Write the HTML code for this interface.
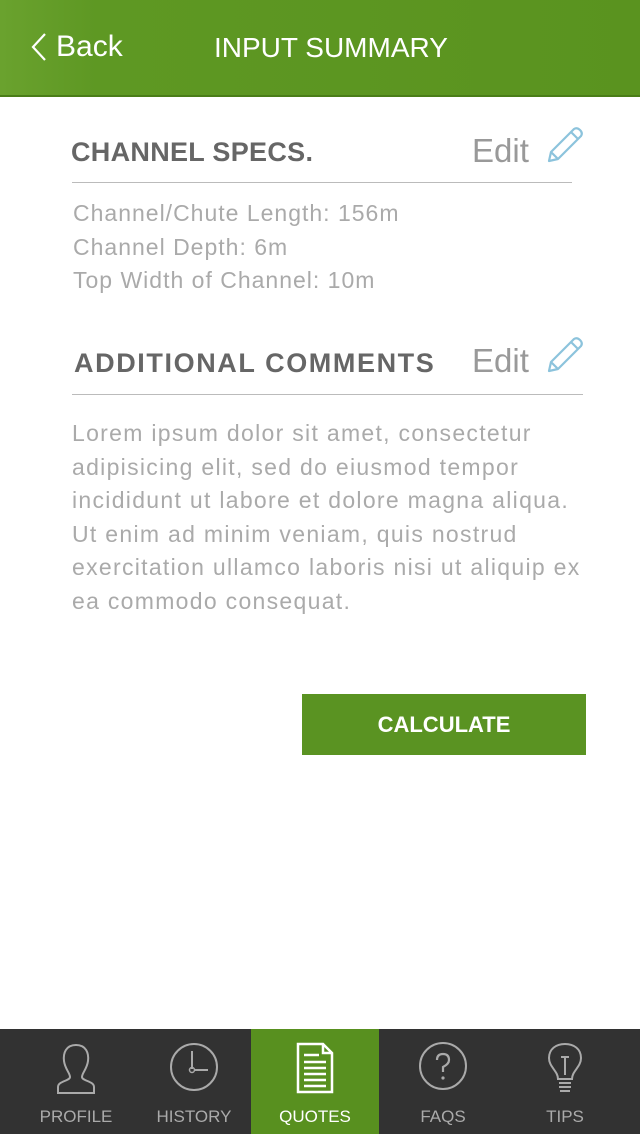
<!DOCTYPE html>
<html><head><meta charset="utf-8"><style>
*{margin:0;padding:0;box-sizing:border-box}
body{width:640px;height:1134px;background:#fff;font-family:"Liberation Sans",sans-serif;position:relative;overflow:hidden}
.hdr{position:absolute;left:0;top:0;width:640px;height:97px;background:linear-gradient(90deg,#6aa22e 0%,#5e9823 15%,#5a931f 100%);border-bottom:2px solid #4a7d18}
.hdr .back{position:absolute;left:56px;top:30px;color:#fff;font-size:30px}
.hdr .title{position:absolute;left:214px;top:32px;color:#fff;font-size:28px}
.h{position:absolute;color:#666;font-size:27px;font-weight:bold;letter-spacing:0.3px}
.edit{position:absolute;color:#999;font-size:33px}
.line{position:absolute;height:1px;background:#bbb}
.txt{position:absolute;color:#aaa;font-size:23px;line-height:33.5px;white-space:nowrap}
.btn{position:absolute;left:302px;top:694px;width:284px;height:61px;background:#5a9322;color:#fff;font-weight:bold;font-size:22px;text-align:center;line-height:61px}
.tab{position:absolute;top:1029px;height:105px;width:640px;background:#323232}
.t{position:absolute;top:0;height:105px;text-align:center;color:#aaa;font-size:17px}
.t span{position:absolute;left:0;right:0;top:78px}
.t svg{position:absolute;left:50%;top:12px;transform:translateX(-50%)}
</style></head><body>
<div class="hdr">
<svg style="position:absolute;left:30px;top:32px" width="18" height="30" viewBox="0 0 18 30"><path d="M15 2 L3 15 L15 28" fill="none" stroke="#fff" stroke-width="2.2"/></svg>
<div class="back">Back</div><div class="title">INPUT SUMMARY</div></div>

<div class="h" style="left:71px;top:137px">CHANNEL SPECS.</div>
<div class="edit" style="left:472px;top:132px">Edit</div>
<svg style="position:absolute;left:545px;top:125px" width="40" height="40" viewBox="0 0 40 40"><path d="M4 36 L6 27 L29 4 Q32 2 35 5 Q38 8 36 11 L13 34 Z M6 27 L13 34 M26 7 L33 14" fill="none" stroke="#8cc3dc" stroke-width="2.2" stroke-linejoin="round"/></svg>
<div class="line" style="left:72px;top:182px;width:500px"></div>
<div class="txt" style="left:73px;top:197px;letter-spacing:1px">Channel/Chute Length: 156m<br>Channel Depth: 6m<br>Top Width of Channel: 10m</div>

<div class="h" style="left:74px;top:348px;letter-spacing:1.6px">ADDITIONAL COMMENTS</div>
<div class="edit" style="left:472px;top:342px">Edit</div>
<svg style="position:absolute;left:545px;top:335px" width="40" height="40" viewBox="0 0 40 40"><path d="M4 36 L6 27 L29 4 Q32 2 35 5 Q38 8 36 11 L13 34 Z M6 27 L13 34 M26 7 L33 14" fill="none" stroke="#8cc3dc" stroke-width="2.2" stroke-linejoin="round"/></svg>
<div class="line" style="left:72px;top:394px;width:511px"></div>
<div class="txt" style="left:72px;top:417px;letter-spacing:1.3px">Lorem ipsum dolor sit amet, consectetur<br>adipisicing elit, sed do eiusmod tempor<br>incididunt ut labore et dolore magna aliqua.<br>Ut enim ad minim veniam, quis nostrud<br>exercitation ullamco laboris nisi ut aliquip ex<br>ea commodo consequat.</div>

<div class="btn">CALCULATE</div>

<div class="tab">
<div class="t" style="left:0;width:152px"><svg width="56" height="56" viewBox="0 0 56 56"><path d="M28 4 C18 4 15 12 16 20 C17 28 22 32 22 36 C22 40 10 40 10 46 L10 52 L46 52 L46 46 C46 40 34 40 34 36 C34 32 39 28 40 20 C41 12 38 4 28 4 Z" fill="none" stroke="#aaa" stroke-width="2"/></svg><span>PROFILE</span></div>
<div class="t" style="left:132px;width:124px"><svg width="52" height="52" viewBox="0 0 52 52"><circle cx="26" cy="26" r="23" fill="none" stroke="#aaa" stroke-width="2"/><path d="M24 10 L24 28 M27 29 L40 29" stroke="#aaa" stroke-width="2"/><circle cx="24" cy="29" r="2.5" fill="none" stroke="#aaa" stroke-width="1.5"/></svg><span>HISTORY</span></div>
<div class="t" style="left:251px;width:128px;background:#58901f;color:#fff"><svg width="40" height="54" viewBox="0 0 40 54"><path d="M3 3 L28 3 L37 12 L37 51 L3 51 Z M28 3 L28 12 L37 12" fill="none" stroke="#fff" stroke-width="2.5"/><path d="M9 14 L24 14 M9 21 L31 21 M9 27 L31 27 M9 33 L31 33 M9 39 L31 39 M9 45 L31 45" stroke="#fff" stroke-width="2.5"/></svg><span>QUOTES</span></div>
<div class="t" style="left:379px;width:128px"><svg width="50" height="50" viewBox="0 0 50 50"><circle cx="25" cy="25" r="23" fill="none" stroke="#aaa" stroke-width="2"/><path d="M19 19 Q19 13 25 13 Q31 13 31 19 Q31 23 25 26 L25 31" fill="none" stroke="#aaa" stroke-width="2.2"/><circle cx="25" cy="37" r="1.6" fill="#aaa"/></svg><span>FAQS</span></div>
<div class="t" style="left:507px;width:116px"><svg width="40" height="56" viewBox="0 0 40 56"><path d="M13 38 C13 30 4 26 4 17 C4 8 11 3 20 3 C29 3 36 8 36 17 C36 26 27 30 27 38 Z" fill="none" stroke="#aaa" stroke-width="2"/><path d="M16 16 L24 16 M20 16 L20 34 M14 42 L26 42 M14 46 L26 46 M15 50 L25 50" stroke="#aaa" stroke-width="2"/></svg><span>TIPS</span></div>
</div>
</body></html>
